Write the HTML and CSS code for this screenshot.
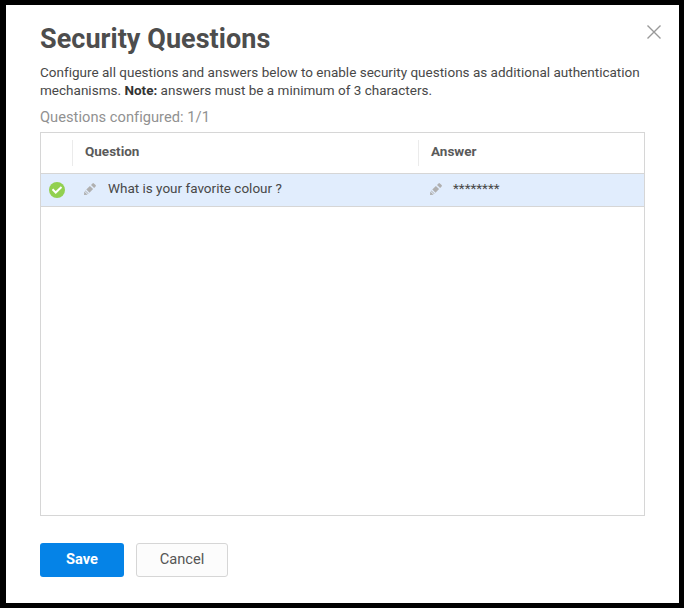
FILE: index.html
```html
<!DOCTYPE html>
<html lang="en">
<head>
<meta charset="utf-8">
<title>Security Questions</title>
<link rel="stylesheet" href="styles.css">
</head>
<body>
<main class="dialog">
  <header class="head">
    <h1>Security Questions</h1>
    <svg class="close" viewBox="0 0 16 16"><path d="M1.5 1.5l13 13M14.5 1.5l-13 13"/></svg>
  </header>
  <p class="intro">Configure all questions and answers below to enable security questions as additional authentication<br>mechanisms. <b>Note:</b> answers must be a minimum of 3 characters.</p>
  <p class="count">Questions configured: 1/1</p>
  <section class="grid">
    <div class="row header">
      <div class="cell"></div>
      <div class="cell"><span>Question</span></div>
      <div class="cell"><span>Answer</span></div>
    </div>
    <div class="row item">
      <div class="cell status"><svg class="check" viewBox="0 0 16 16"><circle cx="8" cy="8" r="8"/><path d="M3.5 7.3l3.2 3.2 5.8-5.5"/></svg></div>
      <div class="cell"><svg class="pencil" viewBox="0 0 12 12"><path d="M0 12l.3-3.6 3.3 3.3zM.9 8l.5-.6 3.2 3.2-.6.5zM2.3 6.5l3.6-3.6 3.2 3.2-3.6 3.6zM7 1.9L8.5.4q.7-.6 1.4 0l1.7 1.7q.6.7 0 1.4L10.1 5z"/></svg><span class="question">What is your favorite colour ?</span></div>
      <div class="cell"><svg class="pencil" viewBox="0 0 12 12"><path d="M0 12l.3-3.6 3.3 3.3zM.9 8l.5-.6 3.2 3.2-.6.5zM2.3 6.5l3.6-3.6 3.2 3.2-3.6 3.6zM7 1.9L8.5.4q.7-.6 1.4 0l1.7 1.7q.6.7 0 1.4L10.1 5z"/></svg><span class="answer">********</span></div>
    </div>
  </section>
  <footer class="actions">
    <button class="btn save">Save</button>
    <button class="btn cancel">Cancel</button>
  </footer>
</main>
</body>
</html>
```
FILE: styles.css
```css
* { box-sizing: border-box; }
body { margin: 0; background: #000; font-family: Roboto, sans-serif; color: #484848; }
.dialog { width: 684px; height: 608px; border: 5px solid #000; border-left-width: 6px; background: #fff; padding: 17px 34px 0; }
.head { display: flex; justify-content: space-between; height: 41px; }
h1 { margin: 0; font-size: 27px; line-height: 35px; font-weight: 700; color: #4d4d4d; letter-spacing: .04px; }
.close { width: 16px; height: 16px; margin: 2px -17px 0 0; flex: none; }
.close path { stroke: #999; stroke-width: 1.4; fill: none; }
.intro { margin: 0; font-size: 13.5px; line-height: 18px; letter-spacing: .01px; white-space: nowrap; }
.intro b { color: #333; }
.count { margin: 9px 0 6px; font-size: 14.67px; line-height: 18px; letter-spacing: .03px; color: #919191; }
.grid { width: 605px; height: 384px; border: 1px solid #d6d6d6; }
.row { display: grid; grid-template-columns: 31px 346px 1fr; }
.header { height: 41px; border-bottom: 1px solid #d6d6d6; font-size: 13.5px; font-weight: 700; color: #5a5a5a; padding: 7px 0; }
.cell { display: flex; align-items: center; padding-left: 12px; }
.header .cell + .cell { border-left: 1px solid #ebebeb; }
.header span { margin-bottom: 4px; }
.item { height: 33px; background: #e1edfd; border-bottom: 1px solid #d6d6d6; font-size: 13.5px; }
.status { padding-left: 8px; }
.check { width: 16px; height: 16px; flex: none; }
.check circle { fill: #92d050; }
.check path { fill: none; stroke: #fff; stroke-width: 2; }
.pencil { width: 12px; height: 12px; margin: 0 12px 2px 0; fill: #b0b0b0; flex: none; }
.question { margin-bottom: 5px; }
.answer { margin: 0 0 5px -1px; }
.actions { display: flex; gap: 12px; margin-top: 27px; }
.btn { height: 34px; border-radius: 3px; font: 14.67px Roboto, sans-serif; padding: 0 0 2px; }
.save { width: 84px; border: 0; background: #0583e7; color: #fff; font-weight: 700; }
.cancel { width: 92px; border: 1px solid #d6d6d6; background: #fcfcfc; color: #555; }
```
